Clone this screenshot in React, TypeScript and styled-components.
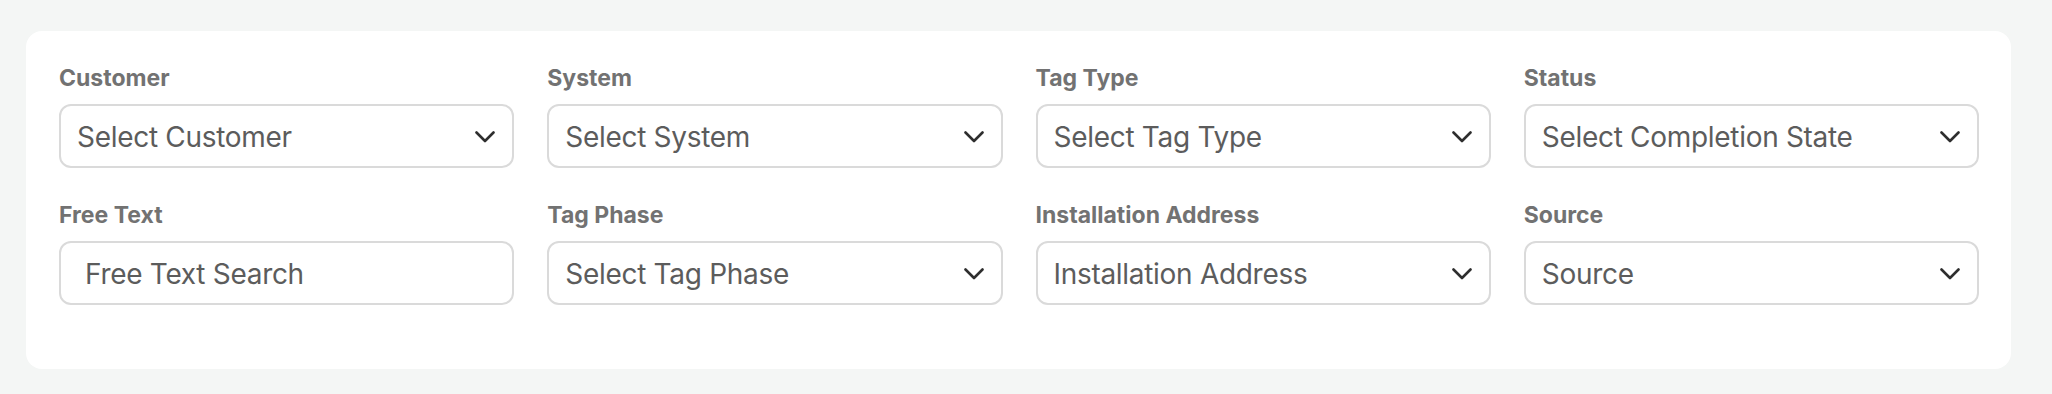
import React from "react";
import styled, { createGlobalStyle } from "styled-components";

const GlobalStyle = createGlobalStyle`
  html, body {
    margin: 0;
    padding: 0;
    background: #f4f6f5;
  }
  body {
    font-family: Inter, "Noto Sans", "Liberation Sans", sans-serif;
  }
  * { box-sizing: border-box; }
`;

const Page = styled.div`
  padding: 31px 41px 26px 26px;
  background: #f4f6f5;
`;

const Card = styled.section`
  background: #ffffff;
  border-radius: 16px;
  padding: 33px 32px 64px 33px;
`;

const Grid = styled.div`
  display: grid;
  grid-template-columns: repeat(4, minmax(0, 1fr));
  column-gap: 33px;
  row-gap: 33px;
`;

const Field = styled.div`
  display: flex;
  flex-direction: column;
  gap: 12px;
`;

const Label = styled.label`
  font-size: 23px;
  line-height: 28px;
  font-weight: 700;
  color: #727272;
  letter-spacing: 0;
`;

const SelectBox = styled.div`
  height: 64px;
  border: 2px solid #dadada;
  border-radius: 12px;
  background: #fff;
  display: flex;
  align-items: center;
  justify-content: space-between;
  padding: 1px 17px 0 16px;
  cursor: pointer;
`;

const SelectValue = styled.span`
  font-size: 28px;
  color: #5c5c5c;
  letter-spacing: -0.3px;
  white-space: nowrap;
`;

const TextInput = styled.input`
  height: 64px;
  border: 2px solid #dadada;
  border-radius: 12px;
  background: #fff;
  padding: 1px 24px 0;
  font-family: inherit;
  font-size: 28px;
  color: #5c5c5c;
  letter-spacing: -0.3px;
  outline: none;
  width: 100%;
  &::placeholder {
    color: #5c5c5c;
    opacity: 1;
  }
`;

const Chevron = () => (
  <svg width="20" height="12" viewBox="0 0 20 12" fill="none" aria-hidden="true">
    <polyline
      points="1.5,1.5 10,10 18.5,1.5"
      stroke="#2e2e2e"
      strokeWidth="2.6"
      strokeLinecap="round"
      strokeLinejoin="round"
    />
  </svg>
);

type FieldDef = { label: string; kind: "select" | "text"; placeholder: string };

const fields: FieldDef[] = [
  { label: "Customer", kind: "select", placeholder: "Select Customer" },
  { label: "System", kind: "select", placeholder: "Select System" },
  { label: "Tag Type", kind: "select", placeholder: "Select Tag Type" },
  { label: "Status", kind: "select", placeholder: "Select Completion State" },
  { label: "Free Text", kind: "text", placeholder: "Free Text Search" },
  { label: "Tag Phase", kind: "select", placeholder: "Select Tag Phase" },
  { label: "Installation Address", kind: "select", placeholder: "Installation Address" },
  { label: "Source", kind: "select", placeholder: "Source" },
];

export default function App() {
  return (
    <>
      <GlobalStyle />
      <Page>
        <Card>
          <Grid>
            {fields.map((f) => (
              <Field key={f.label}>
                <Label>{f.label}</Label>
                {f.kind === "select" ? (
                  <SelectBox role="combobox">
                    <SelectValue>{f.placeholder}</SelectValue>
                    <Chevron />
                  </SelectBox>
                ) : (
                  <TextInput placeholder={f.placeholder} />
                )}
              </Field>
            ))}
          </Grid>
        </Card>
      </Page>
    </>
  );
}
